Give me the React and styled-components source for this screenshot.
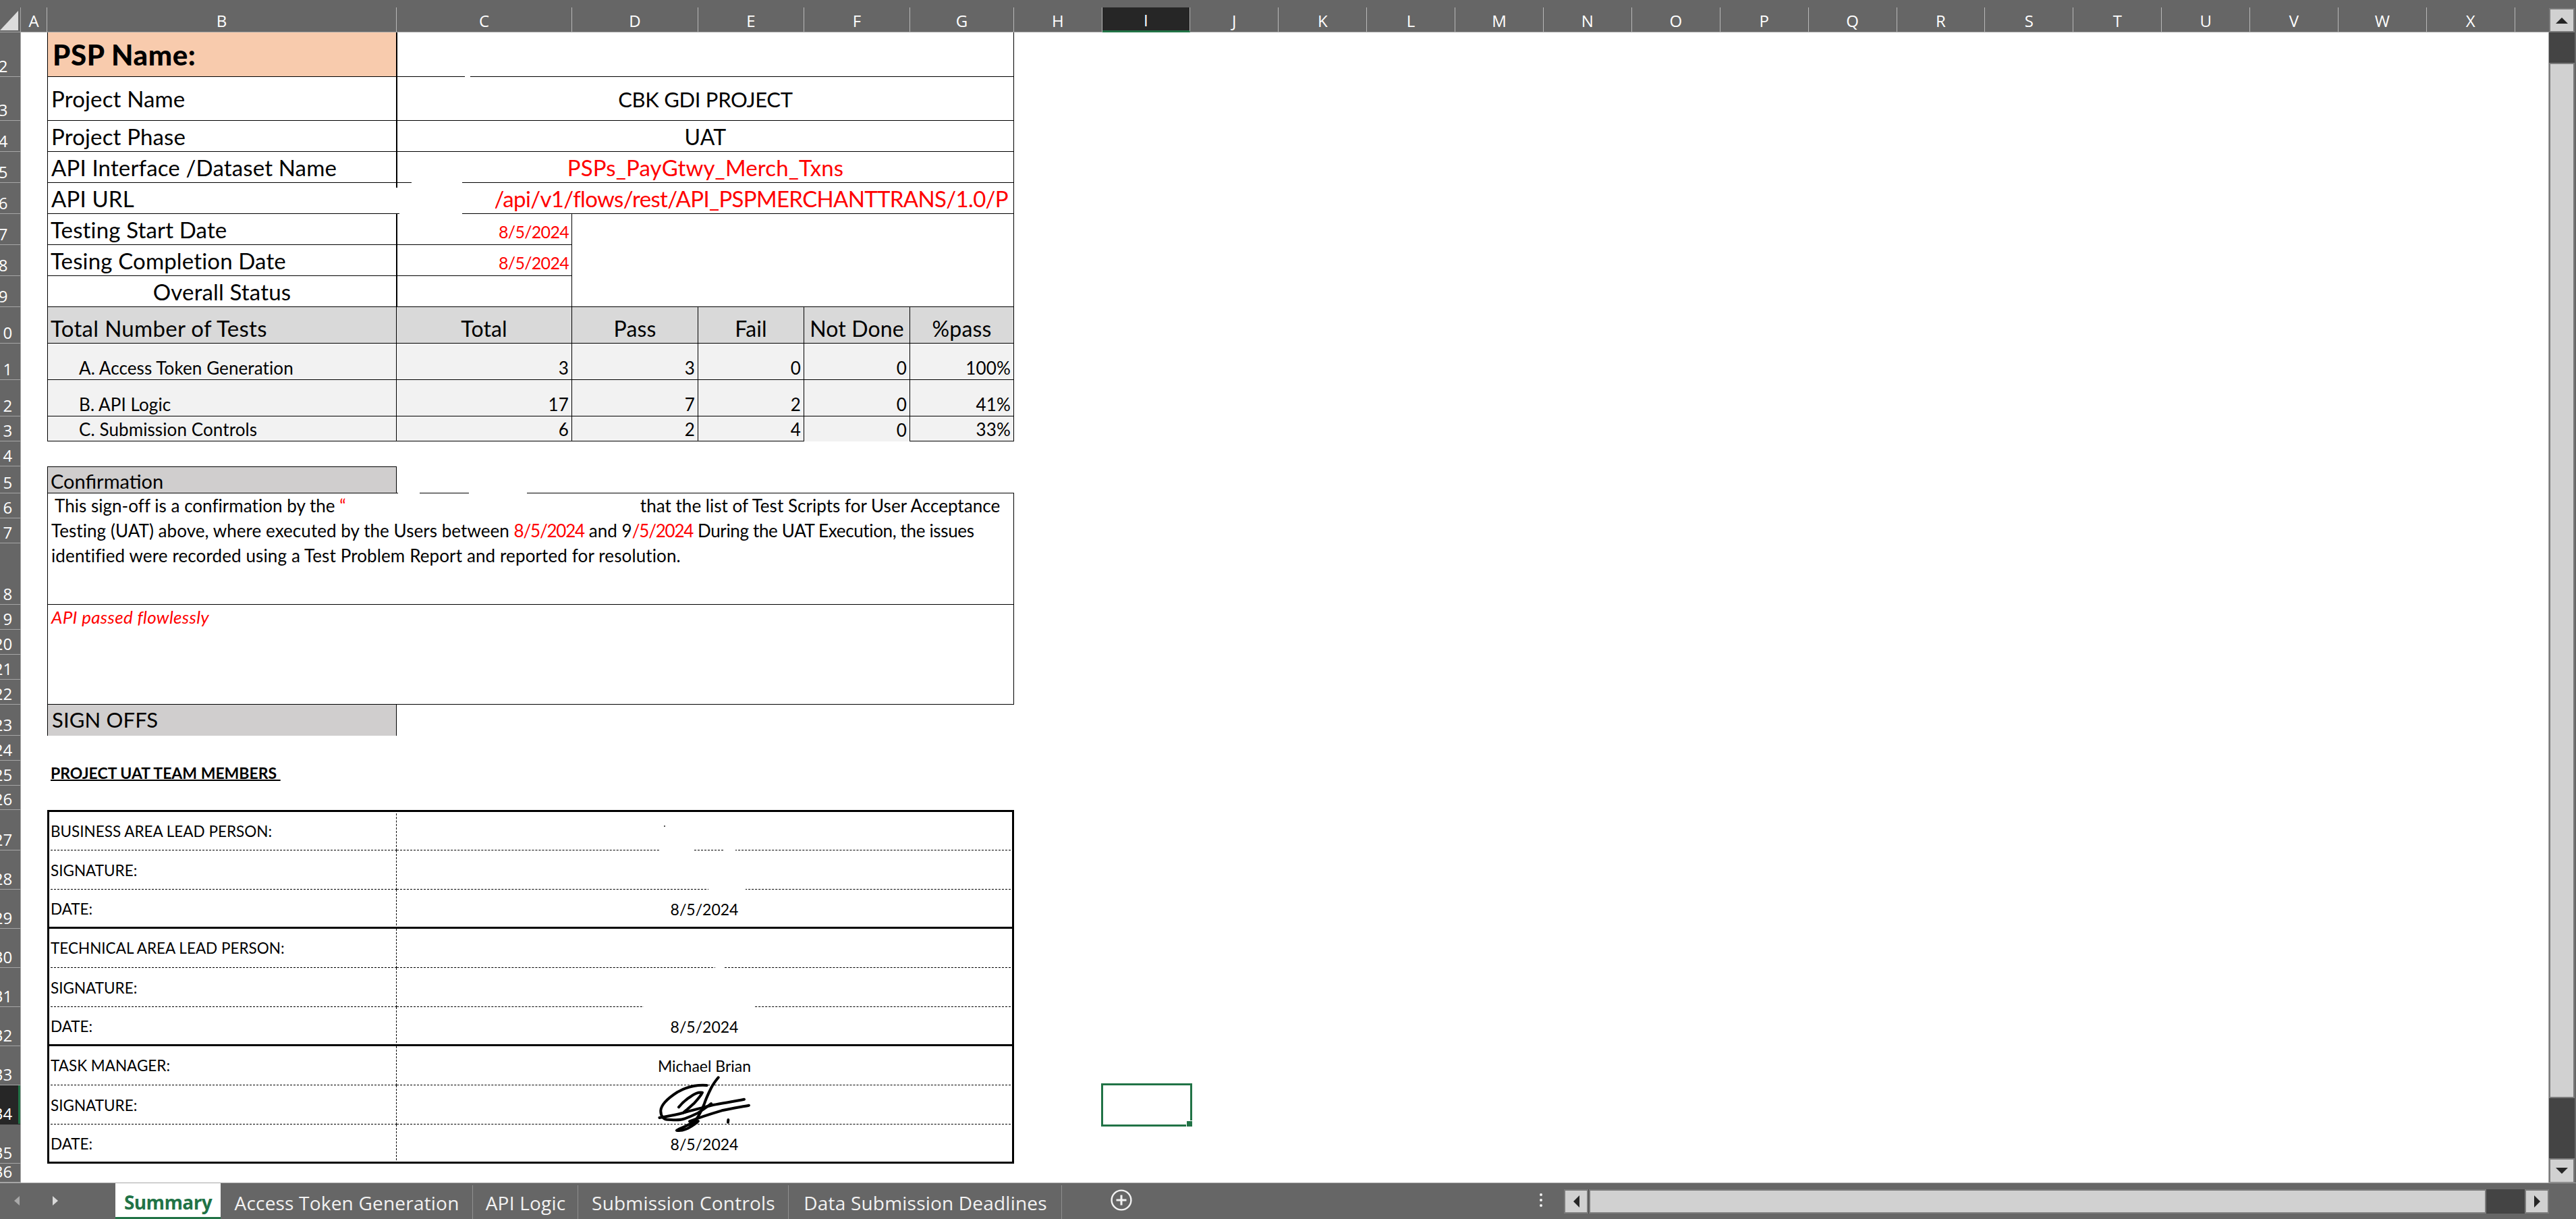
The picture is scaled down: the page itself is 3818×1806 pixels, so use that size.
import React from 'react';
import styled, { createGlobalStyle } from 'styled-components';

const GREEN = '#217346';
const RED = '#ff0000';
const BAR = '#666666';
const FONT = '"Lato", "Liberation Sans", sans-serif';
const UI = '"Open Sans", "Liberation Sans", sans-serif';

const COLS = [39, 518, 260, 187, 157, 157, 154, 130.5, ...Array(16).fill(130.9), 49];
const COL_TEMPLATE = COLS.map((w) => `${w}px`).join(' ');
const LETTERS = ['A','B','C','D','E','F','G','H','I','J','K','L','M','N','O','P','Q','R','S','T','U','V','W','X',''];
const ROWS = [
  [2,66],[3,65],[4,46],[5,46],[6,46],[7,46],[8,46],[9,46],[10,54],[11,54],[12,54],[13,37],[14,37],[15,40],
  [16,37],[17,37],[18,91],[19,37],[20,37],[21,37],[22,37],[23,46],[24,37],[25,37],[26,36],[27,60],[28,58],
  [29,58],[30,58],[31,58],[32,58],[33,58],[34,58],[35,58],[36,28],
];
const ROW_TEMPLATE = ROWS.map(([, h]) => `${h}px`).join(' ');

const Global = createGlobalStyle`
  html, body { margin: 0; padding: 0; background: ${BAR}; overflow: hidden; }
  * { box-sizing: border-box; }
`;

const Workbook = styled.div`
  width: 3818px; height: 1806px; display: flex; flex-direction: column;
  background: ${BAR}; overflow: hidden;
`;
const Main = styled.div`display: flex; height: 1752px;`;
const Pane = styled.div`width: 3778px; display: flex; flex-direction: column;`;

/* column header */
const HeaderStrip = styled.div`display: flex; height: 48px; border-bottom: 1px solid #a6a6a6;`;
const Corner = styled.div`
  width: 31px; flex: none; padding: 5px 3px 2px 0; border-right: 1px solid #a6a6a6; margin-top: 11px;
  svg { display: block; }
`;
const ColumnHeads = styled.div`display: grid; grid-template-columns: ${COL_TEMPLATE}; flex: 1; padding-top: 11px;`;
const ColHead = styled.div`
  display: flex; align-items: flex-end; justify-content: center; padding-bottom: 1px;
  font: 24px/1.3 ${UI}; color: #fff;
  border-right: ${(p) => (p.$last ? 'none' : '1px solid #b8b8b8')};
  ${(p) => p.$active && `background: #262626; border-bottom: 3px solid ${GREEN}; margin-bottom: -1px; padding-bottom: 0;`}
`;

/* row header */
const Body = styled.div`display: flex; flex: 1; min-height: 0;`;
const RowHeads = styled.div`
  width: 31px; flex: none; display: grid; grid-template-rows: ${ROW_TEMPLATE};
  border-right: 1px solid #a6a6a6;
`;
const RowHead = styled.div`
  display: flex; align-items: flex-end; justify-content: center; overflow: hidden;
  padding-right: 21px; font: 24px/1 ${UI}; color: #fff; padding-bottom: 3px;
  border-bottom: 1px solid #a6a6a6;
  ${(p) => p.$active && `background: #262626; box-shadow: inset -3px 0 0 ${GREEN}; border-bottom-color: #262626;`}
`;

/* sheet */
const Sheet = styled.div`
  position: relative; flex: 1; background: #fff; display: grid;
  grid-template-columns: ${COL_TEMPLATE}; grid-template-rows: ${ROW_TEMPLATE};
  border-right: 1px solid #a6a6a6; color: #000; font-family: ${FONT}; white-space: nowrap;
`;
const LINE = '1px solid #000';
const Cell = styled.div`
  grid-column: ${(p) => p.$col} / span ${(p) => p.$span || 1};
  grid-row: ${(p) => p.$row - 1} / span ${(p) => p.$rows || 1};
  display: flex; min-width: 0;
  align-items: ${(p) => p.$v || 'flex-end'};
  justify-content: ${(p) => p.$h || 'flex-start'};
  padding: ${(p) => p.$pt || 0}px ${(p) => p.$pr ?? 5}px ${(p) => p.$pb ?? 5}px ${(p) => p.$pl ?? 5}px;
  font-size: ${(p) => p.$fs || 33}px; line-height: 1;
  letter-spacing: ${(p) => p.$ls ?? 0.15}px;
  color: ${(p) => p.$color || '#000'};
  background: ${(p) => p.$bg || 'transparent'};
  font-weight: ${(p) => p.$weight || 400};
  border-left: ${(p) => p.$bl || 'none'};
  border-right: ${(p) => p.$br || 'none'};
  border-top: ${(p) => p.$bt || 'none'};
  border-bottom: ${(p) => p.$bb || 'none'};
`;
const GridBox = (p) => <Cell $bl={LINE} $br={LINE} $bb={LINE} {...p} />;

const ConfirmBody = styled(Cell)`display: block; padding: 0 5px;`;
const ConfirmLine = styled.div`
  height: 37px; padding: 5px 0 0 ${(p) => p.$indent || 0}px; font-size: 26px; line-height: 26px;
  letter-spacing: ${(p) => p.$ls ?? 0.12}px;
`;
const Run = styled.span`letter-spacing: ${(p) => p.$ls}px;`;
const Red = styled.span`color: ${RED}; ${(p) => p.$ls !== undefined && `letter-spacing: ${p.$ls}px;`}`;
const Redacted = styled.span`display: inline-block; width: ${(p) => p.$w}px;`;
const Heading = styled.span`font-weight: 700; text-decoration: underline; text-decoration-thickness: 2px;`;

const Patch = styled.div`
  position: absolute; background: #fff;
  left: ${(p) => p.$x - 31}px; top: ${(p) => p.$y - 48}px; width: ${(p) => p.$w}px; height: ${(p) => p.$h}px;
`;
const Speck = styled(Patch)`background: #555;`;

const Selected = styled.div`
  grid-column: 9; grid-row: ${34 - 1}; position: relative;
`;
const SelectionBox = styled.div`
  position: absolute; left: -2px; top: -3px; right: -3px; bottom: -3px;
  border: 3px solid ${GREEN};
`;
const FillHandle = styled.div`
  position: absolute; right: -3px; bottom: -3px; width: 8px; height: 8px; background: ${GREEN};
  outline: 1px solid #fff;
`;
const SigAnchor = styled.div`position: relative; width: 100%; height: 100%;`;
const SignatureInk = styled.svg`
  position: absolute; left: ${972 - 588}px; top: ${1592 - 1608}px; overflow: visible;
`;

/* vertical scrollbar */
const VScroll = styled.div`
  width: 38px; margin-top: 12px; height: 1741px; display: flex; flex-direction: column; background: #444;
`;
const ScrollButton = styled.div`
  flex: none; display: flex; align-items: center; justify-content: center;
  width: ${(p) => p.$w || 38}px; height: ${(p) => p.$h || 36}px;
  background: #d1d1d1; border: 2px solid #7b7b7b;
`;
const VThumb = styled.div`flex: none; height: 1534px; margin-top: 45px; margin-bottom: 89px; background: #d1d1d1; border: 2px solid #7b7b7b;`;
const Arrow = styled.i`
  display: block; width: 0; height: 0; border-style: solid;
  ${(p) => ({
    up: `border-width: 0 9px 9px 9px; border-color: transparent transparent #262626 transparent;`,
    down: `border-width: 9px 9px 0 9px; border-color: #262626 transparent transparent transparent;`,
    left: `border-width: 9px 9px 9px 0; border-color: transparent #262626 transparent transparent;`,
    right: `border-width: 9px 0 9px 9px; border-color: transparent transparent transparent #262626;`,
  }[p.$dir])}
`;

/* tab bar */
const TabBar = styled.div`
  height: 54px; display: flex; border-top: 1px solid #a6a6a6; background: ${BAR};
`;
const TabNav = styled.div`
  width: 171px; flex: none; display: flex; align-items: center; padding: 0 0 2px 21px; gap: 49px;
`;
const NavArrow = styled.i`
  display: block; width: 0; height: 0; border-style: solid;
  ${(p) => p.$left
    ? `border-width: 7px 8px 7px 0; border-color: transparent #a9a9a9 transparent transparent;`
    : `border-width: 7px 0 7px 8px; border-color: transparent transparent transparent #d9d9d9;`}
`;
const Tab = styled.div`
  flex: none; width: ${(p) => p.$w}px; display: flex; align-items: center; justify-content: center;
  font: 28px/1 ${UI}; letter-spacing: 0.2px; color: #f2f2f2; position: relative; padding-top: 4px;
  &::after { content: ''; position: absolute; right: 0; top: 3px; bottom: 0; width: 1px; background: #8f8f8f; }
`;
const ActiveTab = styled(Tab)`
  background: #fff; color: ${GREEN}; font-weight: 700; letter-spacing: -0.6px; border-bottom: 3px solid ${GREEN}; padding-top: 6px;
  &::after { display: none; }
`;
const AddSheet = styled.div`flex: none; width: 175px; display: flex; align-items: center; justify-content: center; padding-bottom: 3px;`;
const TabDots = styled.div`
  margin-left: auto; width: 40px; display: flex; align-items: center; justify-content: center; padding-bottom: 3px;
`;
const HScroll = styled.div`
  flex: none; width: 1460px; height: 36px; margin: 9px 40px 0 14px; display: flex; background: #444;
`;
const HThumb = styled.div`flex: none; width: 1330px; margin-left: 1px; background: #d1d1d1; border: 2px solid #7b7b7b;`;
const HGap = styled.div`flex: 1;`;

const SUMMARY = [
  { row: 11, label: 'A. Access Token Generation', v: [3, 3, 0, 0, '100%'] },
  { row: 12, label: 'B. API Logic', v: [17, 7, 2, 0, '41%'] },
  { row: 13, label: 'C. Submission Controls', v: [6, 2, 4, 0, '33%'] },
];
const SIGN_GROUPS = [
  { start: 27, name: 'BUSINESS AREA LEAD PERSON:', person: '' },
  { start: 30, name: 'TECHNICAL AREA LEAD PERSON:', person: '' },
  { start: 33, name: 'TASK MANAGER:', person: 'Michael Brian' },
];
const PATCHES = [
  [689, 111, 8, 4], [610, 268, 75, 4], [586, 278, 148, 38], [592, 314, 93, 4],
  [590, 728, 32, 4], [695, 728, 86, 4],
  [978, 1257, 51, 4], [1072, 1257, 18, 4], [1050, 1315, 55, 4], [1060, 1431, 14, 4], [954, 1489, 165, 4],
];

function Signature() {
  return (
    <SignatureInk width="142" height="86" viewBox="0 0 142 86" fill="none" stroke="#000" strokeWidth="4" strokeLinecap="round" strokeLinejoin="round" aria-hidden="true">
      <path d="M75.5 16C62 15 46 18 32 26C18 35 8 44 7.3 53.3C7 62 12 67 18 66.7C26 67 34 68 40.5 66C50 63 56 60 62.8 56.7C70 52 76 48 82 43" />
      <path d="M92.7 4.3C88 10 85 14 82 20C78 28 75 34 72 43C68 53 64 61 59.6 66.7C54 72 49 74 43.6 76.7C38 79 33 81 31 82.7C36 84 42 82 46.8 80C52 77 58 74 62.8 69" />
      <path d="M5.4 64C16 62 28 60 40.5 56.7C56 52 70 49 85 45C100 42 116 40 131 36.7" />
      <path d="M50 69.3C66 63 82 58 97.9 53.3C112 50 126 48 138 45.7" />
      <path d="M34 48.3C39 42 46 36 53 31.7C58 28 64 26 69 26.7C66 33 61 38 56 43.3C51 48 46 52 40.5 56.7" />
      <path d="M107.4 67L107 70.7" />
    </SignatureInk>
  );
}

export default function App() {
  return (
    <>
      <Global />
      <Workbook>
        <Main>
          <Pane>
            <HeaderStrip>
              <Corner>
                <svg width="27" height="29" viewBox="0 0 27 29"><path d="M27 0V29H0Z" fill="#dcdcdc" /></svg>
              </Corner>
              <ColumnHeads>
                {LETTERS.map((l, i) => (
                  <ColHead key={i} $active={l === 'I'} $last={l === ''}>{l}</ColHead>
                ))}
              </ColumnHeads>
            </HeaderStrip>
            <Body>
              <RowHeads>
                {ROWS.map(([n]) => (
                  <RowHead key={n} $active={n === 34}>{n}</RowHead>
                ))}
              </RowHeads>
              <Sheet>
                {/* title block */}
                <GridBox $col={2} $row={2} $bg="#f8cbad" $fs={42} $weight={900} $v="center" $pl={7} $pb={0} $ls={0.6}>PSP Name:</GridBox>
                <GridBox $col={3} $span={5} $row={2} />

                <GridBox $col={2} $row={3} $pl={5} $pb={15}>Project Name</GridBox>
                <GridBox $col={3} $span={5} $row={3} $h="center" $pb={15} $fs={31} $ls={-0.3}>CBK GDI PROJECT</GridBox>
                <GridBox $col={2} $row={4} $pl={5}>Project Phase</GridBox>
                <GridBox $col={3} $span={5} $row={4} $h="center" $fs={32}>UAT</GridBox>
                <GridBox $col={2} $row={5} $pl={5}>API Interface /Dataset Name</GridBox>
                <GridBox $col={3} $span={5} $row={5} $h="center" $color={RED}>PSPs_PayGtwy_Merch_Txns</GridBox>
                <GridBox $col={2} $row={6} $pl={5}>API URL</GridBox>
                <GridBox $col={3} $span={5} $row={6} $h="flex-end" $color={RED} $pr={8} $ls={-0.67}>/api/v1/flows/rest/API_PSPMERCHANTTRANS/1.0/P</GridBox>
                <GridBox $col={2} $row={7} $pl={4}>Testing Start Date</GridBox>
                <GridBox $col={3} $row={7} $h="flex-end" $fs={25} $ls={-0.7} $color={RED} $pr={4} $pb={6}>8/5/2024</GridBox>
                <GridBox $col={2} $row={8} $pl={4}>Tesing Completion Date</GridBox>
                <GridBox $col={3} $row={8} $h="flex-end" $fs={25} $ls={-0.7} $color={RED} $pr={4} $pb={6}>8/5/2024</GridBox>
                <GridBox $col={2} $row={9} $h="center">Overall Status</GridBox>
                <GridBox $col={3} $row={9} />
                <GridBox $col={4} $span={4} $row={7} $rows={3} $bl="none" />

                {/* totals */}
                <GridBox $col={2} $row={10} $bg="#d9d9d9" $pl={4} $ls={0.3}>Total Number of Tests</GridBox>
                {['Total', 'Pass', 'Fail', 'Not Done', '%pass'].map((t, i) => (
                  <GridBox key={t} $col={3 + i} $row={10} $bg="#d9d9d9" $h="center" $pl={0} $pr={0} $bl="none" $fs={32}>{t}</GridBox>
                ))}
                {SUMMARY.map((r) => (
                  <React.Fragment key={r.row}>
                    <GridBox $col={2} $row={r.row} $bg="#f2f2f2" $fs={26} $pl={46} $pb={4} $ls={0.1}>{r.label}</GridBox>
                    {r.v.map((val, i) => (
                      <GridBox key={i} $col={3 + i} $row={r.row} $bg="#f2f2f2" $fs={26} $h="flex-end" $pr={4} $pl={0} $pb={4} $bl="none"
                        $bb={r.row === 13 && i === 3 ? 'none' : LINE}>{val}</GridBox>
                    ))}
                  </React.Fragment>
                ))}

                {/* confirmation */}
                <Cell $col={2} $row={15} $bg="#d0cece" $bl={LINE} $br={LINE} $bt={LINE} $bb={LINE} $fs={29} $ls={0} $pl={4} $pb={3}>Confirmation</Cell>
                <Cell $col={3} $span={5} $row={15} $bb={LINE} />
                <ConfirmBody $col={2} $span={6} $row={16} $rows={3} $bl={LINE} $br={LINE} $bb={LINE}>
                  <ConfirmLine $indent={5} $ls={0.03}>This sign-off is a confirmation by the <Red>“</Red><Redacted $w={436} /><Run $ls={0.03}>that the list of Test Scripts for User Acceptance</Run></ConfirmLine>
                  <ConfirmLine $ls={0.06}>Testing (UAT) above, where executed by the Users between <Red $ls={-1.2}>8/5/2024</Red> and 9<Red $ls={-1.2}>/5/2024</Red> <Run $ls={-0.35}>During the UAT Execution, the issues</Run></ConfirmLine>
                  <ConfirmLine>identified were recorded using a Test Problem Report and reported for resolution.</ConfirmLine>
                </ConfirmBody>
                <GridBox $col={2} $span={6} $row={19} $rows={4} $v="flex-start" $pt={5} $fs={26} $ls={0.3} $color={RED}>
                  <em>API passed flowlessly</em>
                </GridBox>

                {/* sign offs */}
                <Cell $col={2} $row={23} $bg="#d0cece" $bl={LINE} $br={LINE} $pb={8} $pl={6} $fs={31}>SIGN OFFS</Cell>
                <Cell $col={2} $span={3} $row={25} $fs={23} $pl={5} $pb={7} $ls={0}><Heading>PROJECT UAT TEAM MEMBERS&nbsp;</Heading></Cell>

                {SIGN_GROUPS.map((g) => {
                  const heavy = '3px solid #000';
                  const dash = '1px dashed #000';
                  const first = g.start === 27;
                  return (
                    <React.Fragment key={g.start}>
                      {[g.name, 'SIGNATURE:', 'DATE:'].map((label, i) => {
                        const pt = i === 0 ? (first ? 3 : 1) : 3;
                        return (
                          <React.Fragment key={label}>
                            <Cell $col={2} $row={g.start + i} $fs={22.5} $v="center" $pb={0} $pt={pt}
                              $bl={heavy} $br={dash} $bt={i === 0 && first ? heavy : 'none'} $bb={i === 2 ? heavy : dash} $pl={2} $ls={0}>{label}</Cell>
                            <Cell $col={3} $span={5} $row={g.start + i} $fs={23} $v="center" $h="center" $pb={0} $pt={pt}
                              $br={heavy} $bt={i === 0 && first ? heavy : 'none'} $bb={i === 2 ? heavy : dash} $ls={0}>
                              {i === 0 ? g.person : i === 2 ? '8/5/2024' : ''}
                            </Cell>
                          </React.Fragment>
                        );
                      })}
                    </React.Fragment>
                  );
                })}

                {PATCHES.map(([x, y, w, h]) => (
                  <Patch key={`${x}-${y}`} $x={x} $y={y} $w={w} $h={h} />
                ))}
                <Speck $x={984} $y={1223} $w={2} $h={2} />

                <Cell $col={3} $span={5} $row={34} $pb={0} $pl={0} $pr={0}>
                  <SigAnchor><Signature /></SigAnchor>
                </Cell>

                <Selected>
                  <SelectionBox><FillHandle /></SelectionBox>
                </Selected>
              </Sheet>
            </Body>
          </Pane>
          <VScroll>
            <ScrollButton><Arrow $dir="up" /></ScrollButton>
            <VThumb />
            <ScrollButton $h={37}><Arrow $dir="down" /></ScrollButton>
          </VScroll>
        </Main>
        <TabBar>
          <TabNav><NavArrow $left /><NavArrow /></TabNav>
          <ActiveTab $w={156}>Summary</ActiveTab>
          <Tab $w={374}>Access Token Generation</Tab>
          <Tab $w={156}>API Logic</Tab>
          <Tab $w={312}>Submission Controls</Tab>
          <Tab $w={405}>Data Submission Deadlines</Tab>
          <AddSheet>
            <svg width="32" height="32" viewBox="0 0 32 32" fill="none" stroke="#f2f2f2" strokeWidth="2.4">
              <circle cx="16" cy="16" r="14.4" />
              <path d="M16 8.5V23.5M8.5 16H23.5" strokeWidth="3" />
            </svg>
          </AddSheet>
          <TabDots>
            <svg width="6" height="22" viewBox="0 0 6 22" fill="#f2f2f2">
              <circle cx="3" cy="3" r="2" /><circle cx="3" cy="11" r="2" /><circle cx="3" cy="19" r="2" />
            </svg>
          </TabDots>
          <HScroll>
            <ScrollButton $w={36}><Arrow $dir="left" /></ScrollButton>
            <HThumb />
            <HGap />
            <ScrollButton $w={36}><Arrow $dir="right" /></ScrollButton>
          </HScroll>
        </TabBar>
      </Workbook>
    </>
  );
}
